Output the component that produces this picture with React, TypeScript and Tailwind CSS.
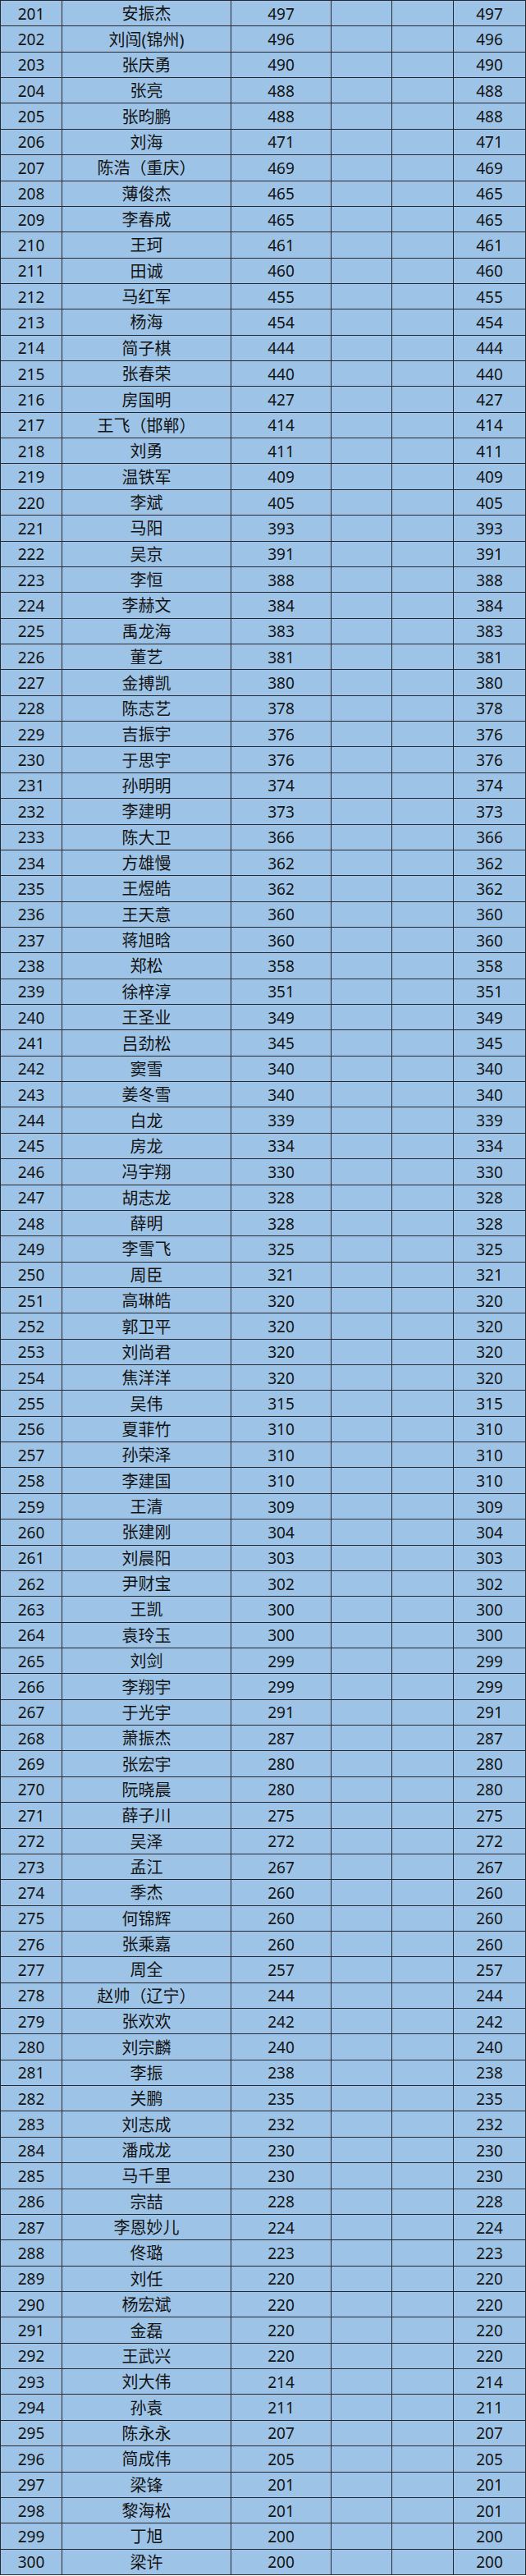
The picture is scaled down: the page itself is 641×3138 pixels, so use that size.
import React from 'react';

type Row = [number, string, number];

const rows: Row[] = [
  [201, '安振杰', 497], [202, '刘闯(锦州)', 496], [203, '张庆勇', 490], [204, '张亮', 488],
  [205, '张昀鹏', 488], [206, '刘海', 471], [207, '陈浩（重庆）', 469], [208, '薄俊杰', 465],
  [209, '李春成', 465], [210, '王珂', 461], [211, '田诚', 460], [212, '马红军', 455],
  [213, '杨海', 454], [214, '简子棋', 444], [215, '张春荣', 440], [216, '房国明', 427],
  [217, '王飞（邯郸）', 414], [218, '刘勇', 411], [219, '温铁军', 409], [220, '李斌', 405],
  [221, '马阳', 393], [222, '吴京', 391], [223, '李恒', 388], [224, '李赫文', 384],
  [225, '禹龙海', 383], [226, '董艺', 381], [227, '金搏凯', 380], [228, '陈志艺', 378],
  [229, '吉振宇', 376], [230, '于思宇', 376], [231, '孙明明', 374], [232, '李建明', 373],
  [233, '陈大卫', 366], [234, '方雄慢', 362], [235, '王煜皓', 362], [236, '王天意', 360],
  [237, '蒋旭晗', 360], [238, '郑松', 358], [239, '徐梓淳', 351], [240, '王圣业', 349],
  [241, '吕劲松', 345], [242, '窦雪', 340], [243, '姜冬雪', 340], [244, '白龙', 339],
  [245, '房龙', 334], [246, '冯宇翔', 330], [247, '胡志龙', 328], [248, '薛明', 328],
  [249, '李雪飞', 325], [250, '周臣', 321], [251, '高琳皓', 320], [252, '郭卫平', 320],
  [253, '刘尚君', 320], [254, '焦洋洋', 320], [255, '吴伟', 315], [256, '夏菲竹', 310],
  [257, '孙荣泽', 310], [258, '李建国', 310], [259, '王清', 309], [260, '张建刚', 304],
  [261, '刘晨阳', 303], [262, '尹财宝', 302], [263, '王凯', 300], [264, '袁玲玉', 300],
  [265, '刘剑', 299], [266, '李翔宇', 299], [267, '于光宇', 291], [268, '萧振杰', 287],
  [269, '张宏宇', 280], [270, '阮晓晨', 280], [271, '薛子川', 275], [272, '吴泽', 272],
  [273, '孟江', 267], [274, '季杰', 260], [275, '何锦辉', 260], [276, '张乘嘉', 260],
  [277, '周全', 257], [278, '赵帅（辽宁）', 244], [279, '张欢欢', 242], [280, '刘宗麟', 240],
  [281, '李振', 238], [282, '关鹏', 235], [283, '刘志成', 232], [284, '潘成龙', 230],
  [285, '马千里', 230], [286, '宗喆', 228], [287, '李恩妙儿', 224], [288, '佟璐', 223],
  [289, '刘任', 220], [290, '杨宏斌', 220], [291, '金磊', 220], [292, '王武兴', 220],
  [293, '刘大伟', 214], [294, '孙袁', 211], [295, '陈永永', 207], [296, '简成伟', 205],
  [297, '梁锋', 201], [298, '黎海松', 201], [299, '丁旭', 200], [300, '梁许', 200],
];

const cell = 'flex items-center justify-center border-r border-b border-[#252a31] pt-[2px]';

const App: React.FC = () => {
  return (
    <div className="w-[641px] bg-[#9dc3e6] border-l border-t border-[#252a31] text-[19px] leading-none text-[#141414] font-['Noto_Sans','Noto_Sans_CJK_SC',sans-serif]">
      {rows.map(([rank, name, score]) => (
        <div
          key={rank}
          className="grid grid-cols-[75px_206px_122px_74px_75px_88px] h-[31.37px]"
        >
          <div className={cell}>{rank}</div>
          <div className={`${cell} text-[20px]`}>{name}</div>
          <div className={cell}>{score}</div>
          <div className={cell} />
          <div className={cell} />
          <div className={cell}>{score}</div>
        </div>
      ))}
    </div>
  );
};

export default App;
